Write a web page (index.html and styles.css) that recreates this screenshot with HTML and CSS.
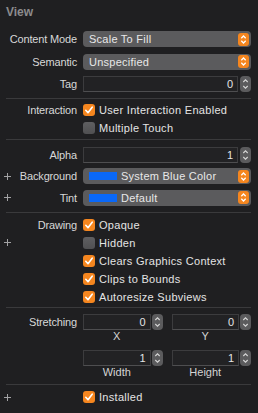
FILE: index.html
```html
<!DOCTYPE html>
<html lang="en">
<head>
  <meta charset="UTF-8">
  <title>View Inspector</title>
  <link rel="stylesheet" href="styles.css">
</head>
<body>

  <div class="inspector">
    <div class="title">View</div>

    <section class="group popups">
      <div class="row">
        <span class="label">Content Mode</span>
        <div class="popup"><span>Scale To Fill</span>
          <svg class="arrows" width="11" height="13" viewBox="0 0 11 13"><path d="M3.3 5.2 L5.5 3 L7.7 5.2 M3.3 7.8 L5.5 10 L7.7 7.8"/></svg>
        </div>
      </div>
      <div class="row">
        <span class="label">Semantic</span>
        <div class="popup"><span>Unspecified</span>
          <svg class="arrows" width="11" height="13" viewBox="0 0 11 13"><path d="M3.3 5.2 L5.5 3 L7.7 5.2 M3.3 7.8 L5.5 10 L7.7 7.8"/></svg>
        </div>
      </div>
      <div class="row">
        <span class="label">Tag</span>
        <div class="number">
          <div class="field">0</div>
          <svg class="stepper" width="11" height="16" viewBox="0 0 11 16"><path d="M3.3 6 L5.5 3.8 L7.7 6 M3.3 10 L5.5 12.2 L7.7 10"/></svg>
        </div>
      </div>
    </section>

    <section class="group checks">
      <div class="row">
        <span class="label">Interaction</span>
        <div class="check"><span class="box on"><svg width="12" height="12" viewBox="0 0 12 12"><path d="M2.8 6.3 L5 8.7 L9.2 3.2"/></svg></span>User Interaction Enabled</div>
      </div>
      <div class="row">
        <span class="label"></span>
        <div class="check"><span class="box"></span>Multiple Touch</div>
      </div>
    </section>

    <section class="group popups loose">
      <div class="row">
        <span class="label">Alpha</span>
        <div class="number">
          <div class="field">1</div>
          <svg class="stepper" width="11" height="16" viewBox="0 0 11 16"><path d="M3.3 6 L5.5 3.8 L7.7 6 M3.3 10 L5.5 12.2 L7.7 10"/></svg>
        </div>
      </div>
      <div class="row">
        <span class="label"><svg class="plus" width="7" height="7" viewBox="0 0 7 7"><path d="M3.5 0 V7 M0 3.5 H7"/></svg>Background</span>
        <div class="popup"><span class="swatch"></span><span>System Blue Color</span>
          <svg class="arrows" width="11" height="13" viewBox="0 0 11 13"><path d="M3.3 5.2 L5.5 3 L7.7 5.2 M3.3 7.8 L5.5 10 L7.7 7.8"/></svg>
        </div>
      </div>
      <div class="row">
        <span class="label"><svg class="plus" width="7" height="7" viewBox="0 0 7 7"><path d="M3.5 0 V7 M0 3.5 H7"/></svg>Tint</span>
        <div class="popup"><span class="swatch"></span><span>Default</span>
          <svg class="arrows" width="11" height="13" viewBox="0 0 11 13"><path d="M3.3 5.2 L5.5 3 L7.7 5.2 M3.3 7.8 L5.5 10 L7.7 7.8"/></svg>
        </div>
      </div>
    </section>

    <section class="group checks drawing">
      <div class="row">
        <span class="label">Drawing</span>
        <div class="check"><span class="box on"><svg width="12" height="12" viewBox="0 0 12 12"><path d="M2.8 6.3 L5 8.7 L9.2 3.2"/></svg></span>Opaque</div>
      </div>
      <div class="row">
        <span class="label"><svg class="plus" width="7" height="7" viewBox="0 0 7 7"><path d="M3.5 0 V7 M0 3.5 H7"/></svg></span>
        <div class="check"><span class="box"></span>Hidden</div>
      </div>
      <div class="row">
        <span class="label"></span>
        <div class="check"><span class="box on"><svg width="12" height="12" viewBox="0 0 12 12"><path d="M2.8 6.3 L5 8.7 L9.2 3.2"/></svg></span>Clears Graphics Context</div>
      </div>
      <div class="row">
        <span class="label"></span>
        <div class="check"><span class="box on"><svg width="12" height="12" viewBox="0 0 12 12"><path d="M2.8 6.3 L5 8.7 L9.2 3.2"/></svg></span>Clips to Bounds</div>
      </div>
      <div class="row">
        <span class="label"></span>
        <div class="check"><span class="box on"><svg width="12" height="12" viewBox="0 0 12 12"><path d="M2.8 6.3 L5 8.7 L9.2 3.2"/></svg></span>Autoresize Subviews</div>
      </div>
    </section>

    <section class="group stretching">
      <div class="row top">
        <span class="label">Stretching</span>
        <div class="pair">
          <div class="num">
            <div class="field">0</div>
            <svg class="stepper" width="11" height="16" viewBox="0 0 11 16"><path d="M3.3 6 L5.5 3.8 L7.7 6 M3.3 10 L5.5 12.2 L7.7 10"/></svg>
            <span class="caption">X</span>
          </div>
          <div class="num">
            <div class="field">0</div>
            <svg class="stepper" width="11" height="16" viewBox="0 0 11 16"><path d="M3.3 6 L5.5 3.8 L7.7 6 M3.3 10 L5.5 12.2 L7.7 10"/></svg>
            <span class="caption">Y</span>
          </div>
        </div>
      </div>
      <div class="row top">
        <span class="label"></span>
        <div class="pair">
          <div class="num">
            <div class="field">1</div>
            <svg class="stepper" width="11" height="16" viewBox="0 0 11 16"><path d="M3.3 6 L5.5 3.8 L7.7 6 M3.3 10 L5.5 12.2 L7.7 10"/></svg>
            <span class="caption">Width</span>
          </div>
          <div class="num">
            <div class="field">1</div>
            <svg class="stepper" width="11" height="16" viewBox="0 0 11 16"><path d="M3.3 6 L5.5 3.8 L7.7 6 M3.3 10 L5.5 12.2 L7.7 10"/></svg>
            <span class="caption">Height</span>
          </div>
        </div>
      </div>
    </section>

    <section class="group installed">
      <div class="row">
        <span class="label"><svg class="plus" width="7" height="7" viewBox="0 0 7 7"><path d="M3.5 0 V7 M0 3.5 H7"/></svg></span>
        <div class="check"><span class="box on"><svg width="12" height="12" viewBox="0 0 12 12"><path d="M2.8 6.3 L5 8.7 L9.2 3.2"/></svg></span>Installed</div>
      </div>
    </section>
  </div>

</body>
</html>
```

FILE: styles.css
```css
html, body {
  margin: 0;
  background: #1f1f21;
}

body {
  font-family: "Liberation Sans", Arial, sans-serif;
  font-size: 11px;
  color: #dcdcdc;
}

.inspector {
  padding: 0 7px 0 6px;
  height: 413px;
  box-sizing: border-box;
}

.title {
  height: 25px;
  line-height: 25px;
  font-size: 12px;
  font-weight: bold;
  color: #8c8c8e;
}

.group {
  border-top: 1px solid #3a3a3c;
}

.group.popups:first-of-type {
  border-top: none;
}

.popups {
  display: flex;
  flex-direction: column;
  gap: 6.5px;
  padding: 6px 0 6px;
}

.popups.loose {
  gap: 5.5px;
  padding: 6.5px 0 6.5px;
}

.checks {
  padding: 2px 0;
}

.checks.drawing {
  padding: 2.5px 0 1.5px;
}

.stretching {
  display: flex;
  flex-direction: column;
  gap: 7px;
  padding: 6px 0 5px;
}

.installed {
  padding-top: 3px;
}

.row {
  display: grid;
  grid-template-columns: 71px 1fr;
  column-gap: 6px;
  align-items: center;
}

.row.top {
  align-items: start;
}

.label {
  display: flex;
  align-items: center;
  justify-content: flex-end;
  height: 16px;
  white-space: nowrap;
  letter-spacing: -0.15px;
  color: #d8d8d8;
}

.plus {
  margin-left: -2px;
  margin-right: auto;
  fill: none;
  stroke: #a2a2a4;
  stroke-width: 1;
}

.popup {
  display: flex;
  align-items: center;
  height: 16px;
  padding: 0 2px 0 6px;
  background: #5b5b5d;
  border-radius: 4px;
  letter-spacing: 0.25px;
  color: #e8e8e8;
}

.popup .arrows {
  margin-left: auto;
  background: #f5861f;
  border-radius: 3px;
  fill: none;
  stroke: #fff;
  stroke-width: 1.3;
}

.swatch {
  width: 28px;
  height: 8px;
  margin-right: 4px;
  background: #0a68f8;
}

.number {
  display: flex;
  align-items: center;
  gap: 2px;
}

.field {
  flex: 1;
  height: 16px;
  box-sizing: border-box;
  line-height: 14px;
  padding-right: 4px;
  text-align: right;
  background: #222224;
  border: 1px solid #3c3c3e;
  border-bottom-color: #4e4e50;
  color: #e4e4e4;
}

.stepper {
  background: #5b5b5d;
  border-radius: 4px;
  fill: none;
  stroke: #d6d6d6;
  stroke-width: 1.1;
}

.check {
  display: flex;
  align-items: center;
  gap: 4px;
  height: 18px;
  letter-spacing: 0.3px;
  color: #e4e4e4;
  white-space: nowrap;
}

.box {
  width: 12px;
  height: 12px;
  border-radius: 3px;
  background: linear-gradient(#5f5f61, #505052);
  flex: none;
}

.box.on {
  background: #f5861f;
}

.box svg {
  display: block;
  fill: none;
  stroke: #fff;
  stroke-width: 1.6;
  stroke-linecap: round;
  stroke-linejoin: round;
}

.pair {
  display: grid;
  grid-template-columns: 1fr 1fr;
  column-gap: 9px;
}

.num {
  display: grid;
  grid-template-columns: 1fr 11px;
  column-gap: 1px;
}

.caption {
  grid-column: 1;
  text-align: center;
  line-height: 13px;
  color: #d4d4d4;
}
```
